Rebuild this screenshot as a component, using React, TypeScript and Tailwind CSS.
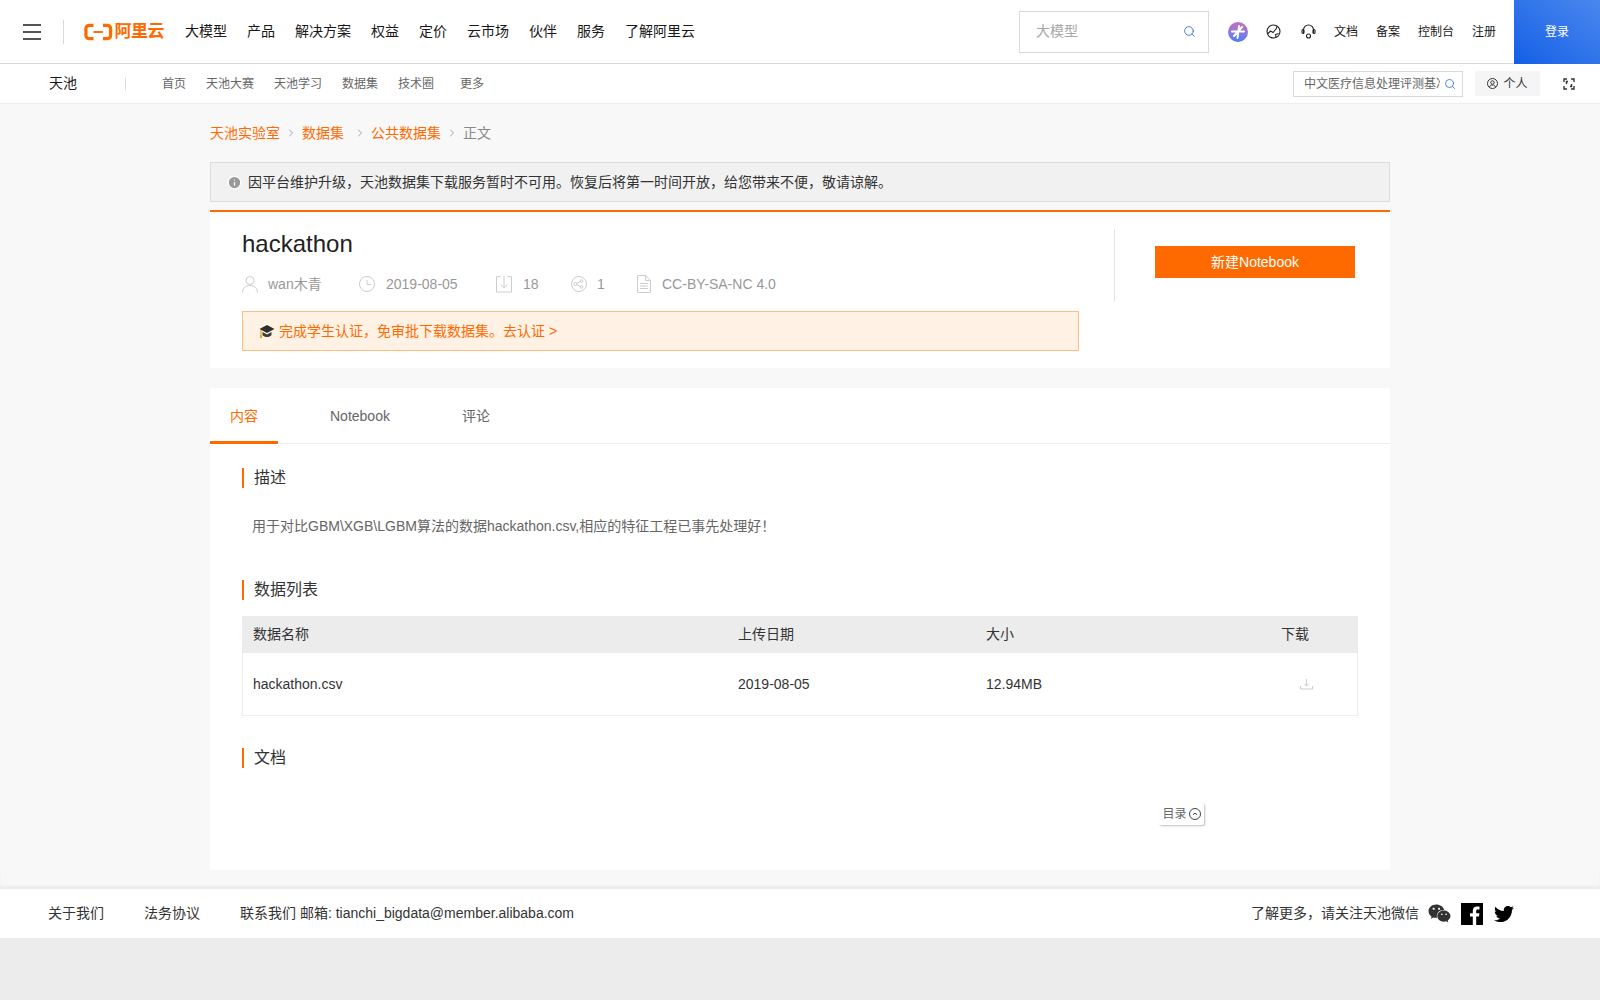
import React from "react";
import { Search, Info, ChevronRight } from "lucide-react";
import { FaTwitter, FaWeixin } from "react-icons/fa";

const topNav = ["大模型", "产品", "解决方案", "权益", "定价", "云市场", "伙伴", "服务", "了解阿里云"];
const subNav = ["首页", "天池大赛", "天池学习", "数据集", "技术圈"];

function Logo() {
  return (
    <div className="flex items-center gap-[2px] ml-[20px] w-[80px] text-[#ff6a00]">
      <svg width="30" height="18" viewBox="0 0 30 18" fill="none">
        <path d="M10 2H5.5C3.5 2 2 3.4 2 5.3v7.4C2 14.6 3.5 16 5.5 16H10" stroke="#ff6a00" strokeWidth="3.4" />
        <path d="M20 2h4.5C26.5 2 28 3.4 28 5.3v7.4c0 1.9-1.500 3.300-3.500 3.300H20" stroke="#ff6a00" strokeWidth="3.4" />
        <rect x="10" y="8" width="10" height="2" fill="#ff6a00" />
      </svg>
      <span className="text-[17px] leading-none font-bold whitespace-nowrap tracking-[-0.5px]">阿里云</span>
    </div>
  );
}

function Spark() {
  return (
    <div className="w-[20px] h-[20px] rounded-full bg-gradient-to-b from-[#c86ac0] to-[#3f7ff5] flex items-center justify-center">
      <svg width="14" height="14" viewBox="0 0 14 14" stroke="#fff" strokeWidth="2" strokeLinecap="round">
        <path d="M8 1L6.500 13M1 6.500h12M3 11l8-9" />
      </svg>
    </div>
  );
}

function GlobeIcon() {
  return (
    <svg width="15" height="15" viewBox="0 0 15 15" fill="none" stroke="#222" strokeWidth="1.100">
      <circle cx="7.500" cy="7.500" r="6.500" />
      <path d="M1.500 10l3-3 2.500 1.500L10 5l1.500-3M10 13l-.5-2.500 3-1" />
    </svg>
  );
}

function HeadsetIcon() {
  return (
    <svg width="15" height="15" viewBox="0 0 15 15" fill="none" stroke="#222" strokeWidth="1.100">
      <path d="M2.500 9V6a5 5 0 0 1 10 0v3" />
      <rect x="1" y="5.500" width="2" height="4" rx="1" />
      <rect x="12" y="5.500" width="2" height="4" rx="1" />
      <circle cx="7.500" cy="12" r="2" />
    </svg>
  );
}

function MetaUser() {
  return (
    <svg width="16" height="18" viewBox="0 0 16 18" fill="none" stroke="#ccc" strokeWidth="1">
      <circle cx="8" cy="5.500" r="4" />
      <path d="M.5 17.500c0-4 3-7 7.500-7s7.500 3 7.500 7" />
    </svg>
  );
}
function MetaClock() {
  return (
    <svg width="16" height="16" viewBox="0 0 16 16" fill="none" stroke="#ccc" strokeWidth="1">
      <circle cx="8" cy="8" r="7.500" />
      <path d="M8 4v4.500h4" />
    </svg>
  );
}
function MetaDownload() {
  return (
    <svg width="16" height="18" viewBox="0 0 16 18" fill="none" stroke="#ccc" strokeWidth="1">
      <path d="M4.500 1.500H1a.5.5 0 0 0-.5.500v15h15V2a.5.5 0 0 0-.5-.5h-3.500" />
      <path d="M8 1v12M4.500 9.500L8 13l3.500-3.500" />
    </svg>
  );
}
function MetaShare() {
  return (
    <svg width="16" height="16" viewBox="0 0 16 16" fill="none" stroke="#ccc" strokeWidth="1">
      <circle cx="8" cy="8" r="7.500" />
      <circle cx="4.500" cy="8" r="1.500" />
      <circle cx="10.500" cy="5" r="1.300" />
      <circle cx="10.500" cy="11" r="1.300" />
      <path d="M6 7.300l3.300-1.700M6 8.700l3.300 1.700" />
    </svg>
  );
}
function MetaDoc() {
  return (
    <svg width="14" height="18" viewBox="0 0 14 18" fill="none" stroke="#ccc" strokeWidth="1">
      <path d="M.5.500h8l5 5v12H.5zM8.500.5v5h5M3 8.500h8M3 11h8M3 13.500h8" />
    </svg>
  );
}

function Cap() {
  return (
    <svg width="16" height="15" viewBox="0 0 16 15" className="shrink-0">
      <path d="M8 1L.5 5 8 9l7.500-4z" fill="#2f2f2f" />
      <path d="M3.500 8v3c1 1.500 3 2 4.500 2s3.500-.5 4.500-2V8L8 10.500z" fill="#3a3a3a" />
      <path d="M2 6v6" stroke="#d9a520" strokeWidth="1.200" />
      <rect x="1" y="11" width="2" height="3" fill="#e0a820" />
    </svg>
  );
}

function SectionTitle({ children }: { children: React.ReactNode }) {
  return (
    <div className="h-[20px] border-l-2 border-[#ff6a00] pl-[10px] text-[16px] leading-[20px] text-[#333]">{children}</div>
  );
}

function Crumb({ children }: { children: React.ReactNode }) {
  return <span className="text-[#ff6a00]">{children}</span>;
}

function Sep() {
  return <ChevronRight size={12} strokeWidth={1.300} className="text-[#777] mx-[5px]" />;
}

export default function App() {
  return (
    <div className="min-h-[1000px] bg-[#ececec] font-['Liberation_Sans','Noto_Sans_CJK_SC',sans-serif]">
      {/* top bar */}
      <header className="h-[64px] bg-white border-b border-[#d9d9d9] flex items-center">
        <div className="ml-[23px] w-[18px] flex flex-col gap-[5px]">
          <span className="h-[2px] bg-[#555]" />
          <span className="h-[2px] bg-[#555]" />
          <span className="h-[2px] bg-[#555]" />
        </div>
        <div className="ml-[22px] w-px h-[24px] bg-[#d9d9d9]" />
        <Logo />
        <nav className="ml-[21px] flex gap-[20px] text-[14px] text-[#181818] whitespace-nowrap">
          {topNav.map((n) => (
            <span key={n}>{n}</span>
          ))}
        </nav>
        <div className="ml-auto w-[190px] h-[42px] border border-[#d9d9d9] flex items-center justify-between pl-[16px] pr-[12px]">
          <span className="text-[14px] text-[#a8a8a8]">大模型</span>
          <Search size={13} strokeWidth={1.500} className="text-[#1a66e0]" />
        </div>
        <div className="ml-[19px] flex items-center">
          <Spark />
          <span className="ml-[18px]"><GlobeIcon /></span>
          <span className="ml-[20px]"><HeadsetIcon /></span>
        </div>
        <div className="ml-[18px] flex gap-[18px] text-[12px] text-[#181818] whitespace-nowrap">
          <span>文档</span>
          <span>备案</span>
          <span>控制台</span>
          <span>注册</span>
        </div>
        <div className="ml-[18px] w-[86px] h-[64px] bg-gradient-to-tr from-[#0f5fe6] to-[#4a87ee] text-white text-[12px] flex items-center justify-center">
          登录
        </div>
      </header>

      {/* sub bar */}
      <div className="h-[40px] bg-white border-b border-[#eeeeee] flex items-center">
        <span className="ml-[49px] w-[76px] text-[14px] text-[#181818]">天池</span>
        <span className="w-px h-[12px] bg-[#d9d9d9]" />
        <nav className="ml-[36px] flex gap-[20px] text-[12px] text-[#666] whitespace-nowrap">
          {subNav.map((n) => (
            <span key={n}>{n}</span>
          ))}
          <span className="ml-[6px]">更多</span>
        </nav>
        <div className="ml-auto w-[170px] h-[26px] border border-[#d9d9d9] flex items-center pl-[10px] pr-[6px] gap-[4px]">
          <span className="flex-1 overflow-hidden whitespace-nowrap text-[12px] text-[#666]">中文医疗信息处理评测基准</span>
          <Search size={12} strokeWidth={1.500} className="text-[#1a66e0] shrink-0" />
        </div>
        <div className="ml-[12px] w-[65px] h-[25px] bg-[#f5f5f5] flex items-center justify-center gap-[5px] text-[12px] text-[#333]">
          <svg width="11" height="11" viewBox="0 0 11 11" fill="none" stroke="#333" strokeWidth="1">
            <circle cx="5.500" cy="5.500" r="5" />
            <circle cx="5.500" cy="4.500" r="1.700" />
            <path d="M2.500 9c.5-1.500 1.500-2 3-2s2.500.5 3 2" />
          </svg>
          个人
        </div>
        <svg width="12" height="12" viewBox="0 0 12 12" fill="none" stroke="#333" strokeWidth="1.400" className="ml-[23px] mr-[25px]">
          <path d="M1 4V1h3M8 1h3v3M11 8v3H8M4 11H1V8M5 3.500H3.500V6M7 8.500h1.500V6" />
        </svg>
      </div>

      {/* main */}
      <main className="bg-[#f8f8f8] h-[766px]">
        <div className="w-[1180px] mx-auto relative">
          <div className="h-[58px] flex items-center text-[14px] pb-[-0px]">
            <Crumb>天池实验室</Crumb>
            <Sep />
            <Crumb>数据集</Crumb>
            <span className="w-[5px]" />
            <Sep />
            <Crumb>公共数据集</Crumb>
            <span className="w-[0px]" />
            <Sep />
            <span className="text-[#888]">正文</span>
          </div>

          <div className="h-[40px] bg-[#f1f1f1] border border-[#dddddd] flex items-center pl-[16px] gap-[6px] text-[14px] text-[#333]">
            <Info size={15} strokeWidth={2} className="text-white fill-[#999]" />
            因平台维护升级，天池数据集下载服务暂时不可用。恢复后将第一时间开放，给您带来不便，敬请谅解。
          </div>

          <section className="mt-[8px] h-[158px] bg-white border-t-2 border-[#ff6a00] flex">
            <div className="w-[904px] pl-[32px] pt-[17px] shrink-0">
              <h1 className="text-[24px] leading-[30px] text-[#222]">hackathon</h1>
              <div className="mt-[15px] h-[20px] flex items-center text-[14px] text-[#999] whitespace-nowrap">
                <MetaUser />
                <span className="ml-[10px] w-[91px]">wan木青</span>
                <MetaClock />
                <span className="ml-[11px] w-[110px]">2019-08-05</span>
                <MetaDownload />
                <span className="ml-[11px] w-[48px]">18</span>
                <MetaShare />
                <span className="ml-[10px] w-[40px]">1</span>
                <MetaDoc />
                <span className="ml-[11px]">CC-BY-SA-NC 4.0</span>
              </div>
              <div className="mt-[17px] w-[837px] h-[40px] bg-[#fff2e5] border border-[#ffbd80] flex items-center pl-[16px] gap-[4px] text-[14px] text-[#ff6a00]">
                <Cap />
                完成学生认证，免审批下载数据集。去认证 &gt;
              </div>
            </div>
            <div className="mt-[17px] h-[72px] w-px bg-[#e5e5e5]" />
            <div className="ml-[40px] mt-[34px] w-[200px] h-[32px] bg-[#ff6a00] text-white text-[14px] flex items-center justify-center">
              新建Notebook
            </div>
          </section>

          <section className="mt-[20px] h-[482px] bg-white">
            <div className="h-[56px] border-b border-[#eeeeee] flex text-[14px] text-[#666]">
              <div className="w-[68px] h-[56px] border-b-[3px] border-[#ff6a00] text-[#ff6a00] pl-[20px] leading-[56px]">内容</div>
              <div className="ml-[52px] leading-[56px]">Notebook</div>
              <div className="ml-[72px] leading-[56px]">评论</div>
            </div>
            <div className="pl-[32px] pr-[32px]">
              <div className="pt-[24px]">
                <SectionTitle>描述</SectionTitle>
              </div>
              <p className="mt-[28px] ml-[10px] text-[14px] leading-[20px] text-[#666]">
                用于对比GBM\XGB\LGBM算法的数据hackathon.csv,相应的特征工程已事先处理好！
              </p>
              <div className="mt-[44px]">
                <SectionTitle>数据列表</SectionTitle>
              </div>
              <div className="mt-[16px] w-[1116px] border border-[#eeeeee] text-[14px] text-[#333]">
                <div className="h-[37px] bg-[#ececec] flex items-center -mt-px -mx-px">
                  <span className="ml-[11px] w-[485px]">数据名称</span>
                  <span className="w-[248px]">上传日期</span>
                  <span className="w-[295px]">大小</span>
                  <span>下载</span>
                </div>
                <div className="h-[62px] flex items-center">
                  <span className="ml-[10px] w-[485px]">hackathon.csv</span>
                  <span className="w-[248px]">2019-08-05</span>
                  <span className="w-[314px]">12.94MB</span>
                  <svg width="13" height="12" viewBox="0 0 13 12" fill="none" stroke="#ccc" strokeWidth="1">
                    <path d="M6.500 1v7M4 5.500l2.500 2.500L9 5.500M.5 8v3h12V8" />
                  </svg>
                </div>
              </div>
              <div className="mt-[32px]">
                <SectionTitle>文档</SectionTitle>
              </div>
            </div>
          </section>

          <div className="absolute left-[949px] top-[699px] w-[45px] h-[22px] bg-white rounded-[2px] shadow-[1px_1px_2px_rgba(0,0,0,0.25)] flex items-center justify-center gap-[2px] text-[12px] text-[#666]">
            目录
            <svg width="12" height="12" viewBox="0 0 12 12" fill="none" stroke="#444" strokeWidth="1">
              <circle cx="6" cy="6" r="5.500" />
              <path d="M4 6.800L6 5l2 1.800" />
            </svg>
          </div>
        </div>
      </main>

      {/* footer */}
      <div className="h-[19px] bg-[#f8f8f8] shadow-[inset_0_-3px_3px_rgba(0,0,0,0.05)]" />
      <footer className="h-[49px] bg-white flex items-center text-[14px] text-[#333] whitespace-nowrap">
        <span className="ml-[48px]">关于我们</span>
        <span className="ml-[40px]">法务协议</span>
        <span className="ml-[40px]">联系我们 邮箱: tianchi_bigdata@member.alibaba.com</span>
        <span className="ml-auto">了解更多，请关注天池微信</span>
        <FaWeixin size={23} className="ml-[9px] text-[#333]" />
        <svg width="22" height="22" viewBox="0 0 22 22" className="ml-[10px]">
          <rect width="22" height="22" fill="#000" />
          <path d="M15.200 22v-8.400h2.800l.4-3.300h-3.200V8.200c0-1 .3-1.600 1.600-1.600h1.700V3.700c-.3 0-1.300-.1-2.500-.1-2.500 0-4.200 1.500-4.200 4.300v2.400H9v3.300h2.800V22z" fill="#fff" />
        </svg>
        <FaTwitter size={20} className="ml-[11px] mr-[86px] text-black" />
      </footer>
    </div>
  );
}
